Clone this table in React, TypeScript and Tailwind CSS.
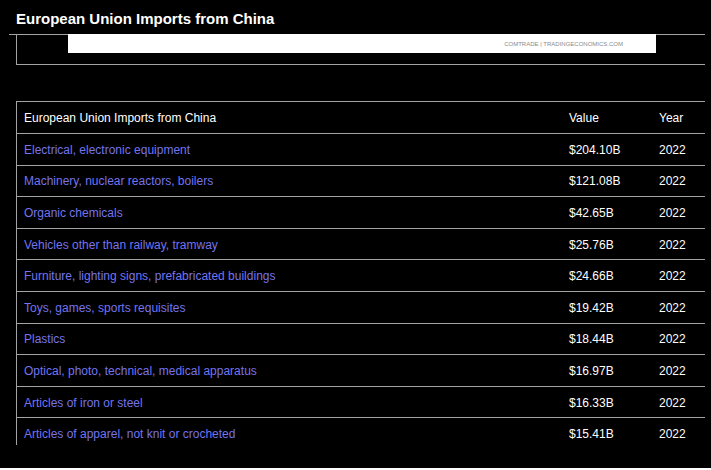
const rows = [
  { name: 'Electrical, electronic equipment', value: '$204.10B', year: '2022' },
  { name: 'Machinery, nuclear reactors, boilers', value: '$121.08B', year: '2022' },
  { name: 'Organic chemicals', value: '$42.65B', year: '2022' },
  { name: 'Vehicles other than railway, tramway', value: '$25.76B', year: '2022' },
  { name: 'Furniture, lighting signs, prefabricated buildings', value: '$24.66B', year: '2022' },
  { name: 'Toys, games, sports requisites', value: '$19.42B', year: '2022' },
  { name: 'Plastics', value: '$18.44B', year: '2022' },
  { name: 'Optical, photo, technical, medical apparatus', value: '$16.97B', year: '2022' },
  { name: 'Articles of iron or steel', value: '$16.33B', year: '2022' },
  { name: 'Articles of apparel, not knit or crocheted', value: '$15.41B', year: '2022' },
];

export default function App() {
  return (
    <div className="w-[711px] h-[470px] bg-black overflow-hidden font-['Liberation_Sans',Arial,sans-serif] text-white">
      <h1 className="pl-[16px] pt-[10px] h-[34px] text-[15px] leading-[18px] font-bold">
        European Union Imports from China
      </h1>

      {/* chart frame */}
      <div className="ml-[9px] mr-[6px] border-t border-[#a3a3a3]">
        <div className="ml-[7px] h-[31px] border-l border-b border-[#a3a3a3]">
          <div className="-mt-px ml-[51px] w-[588px] h-[19px] bg-white flex items-center justify-end pr-[33px]">
            <span className="text-[6px] leading-none text-[#8a8a8a]">
              COMTRADE | TRADINGECONOMICS.COM
            </span>
          </div>
        </div>
      </div>

      {/* table */}
      <div className="mt-[36px] ml-[16px] mr-[6px] border-t border-l border-[#a3a3a3] text-[12px] leading-[15px]">
        <div className="grid grid-cols-[545px_90px_1fr] h-[32px] items-center border-b border-[#a3a3a3]">
          <span className="pl-[7px] pt-[1px]">European Union Imports from China</span>
          <span className="pl-[7px] pt-[1px]">Value</span>
          <span className="pl-[7px] pt-[1px]">Year</span>
        </div>
        {rows.map((r, i) => {
          const last = i === rows.length - 1;
          return (
            <div
              key={r.name}
              className={
                last
                  ? 'grid grid-cols-[545px_90px_1fr] h-[27px] items-start pt-[9px]'
                  : 'grid grid-cols-[545px_90px_1fr] h-[31.6px] items-center border-b border-[#a3a3a3] pt-[2px]'
              }
            >
              <span className="pl-[7px] text-[#7474ee]">{r.name}</span>
              <span className="pl-[7px]">{r.value}</span>
              <span className="pl-[7px]">{r.year}</span>
            </div>
          );
        })}
      </div>
      <div className="mt-[23px] h-[2px] bg-white" />
    </div>
  );
}
